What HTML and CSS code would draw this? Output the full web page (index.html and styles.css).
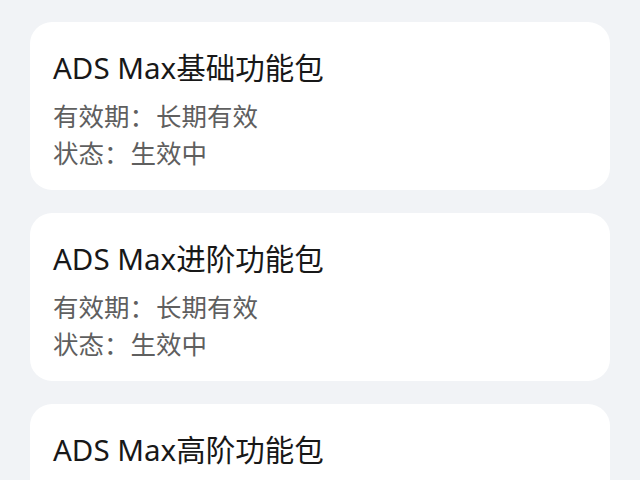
FILE: index.html
```html
<!DOCTYPE html>
<html lang="zh">
<head>
<meta charset="utf-8">
<link rel="stylesheet" href="styles.css">
</head>
<body>
<div class="list">
  <div class="card">
    <div class="title">ADS Max基础功能包</div>
    <div class="meta">有效期<span class="colon">：</span>长期有效</div>
    <div class="meta">状态<span class="colon">：</span>生效中</div>
  </div>
  <div class="card">
    <div class="title">ADS Max进阶功能包</div>
    <div class="meta">有效期<span class="colon">：</span>长期有效</div>
    <div class="meta">状态<span class="colon">：</span>生效中</div>
  </div>
  <div class="card">
    <div class="title">ADS Max高阶功能包</div>
    <div class="meta">有效期<span class="colon">：</span>长期有效</div>
    <div class="meta">状态<span class="colon">：</span>生效中</div>
  </div>
</div>
</body>
</html>
```

FILE: styles.css
```css
html, body {
  margin: 0;
  padding: 0;
  background: #f1f3f6;
}
body {
  font-family: "Noto Sans", "Noto Sans CJK SC", sans-serif;
}
.list {
  display: flex;
  flex-direction: column;
  gap: 23px;
  padding: 22px 30px;
}
.card {
  background: #ffffff;
  border-radius: 22px;
  padding: 28px 23px 18px;
  height: 168px;
  box-sizing: border-box;
}
.title {
  font-size: 29.5px;
  line-height: 36px;
  color: #181818;
  margin-bottom: 12px;
}
.meta {
  font-size: 25.5px;
  line-height: 37px;
  color: #5f5f5f;
}
.colon {
  margin-right: 1px;
}
```
